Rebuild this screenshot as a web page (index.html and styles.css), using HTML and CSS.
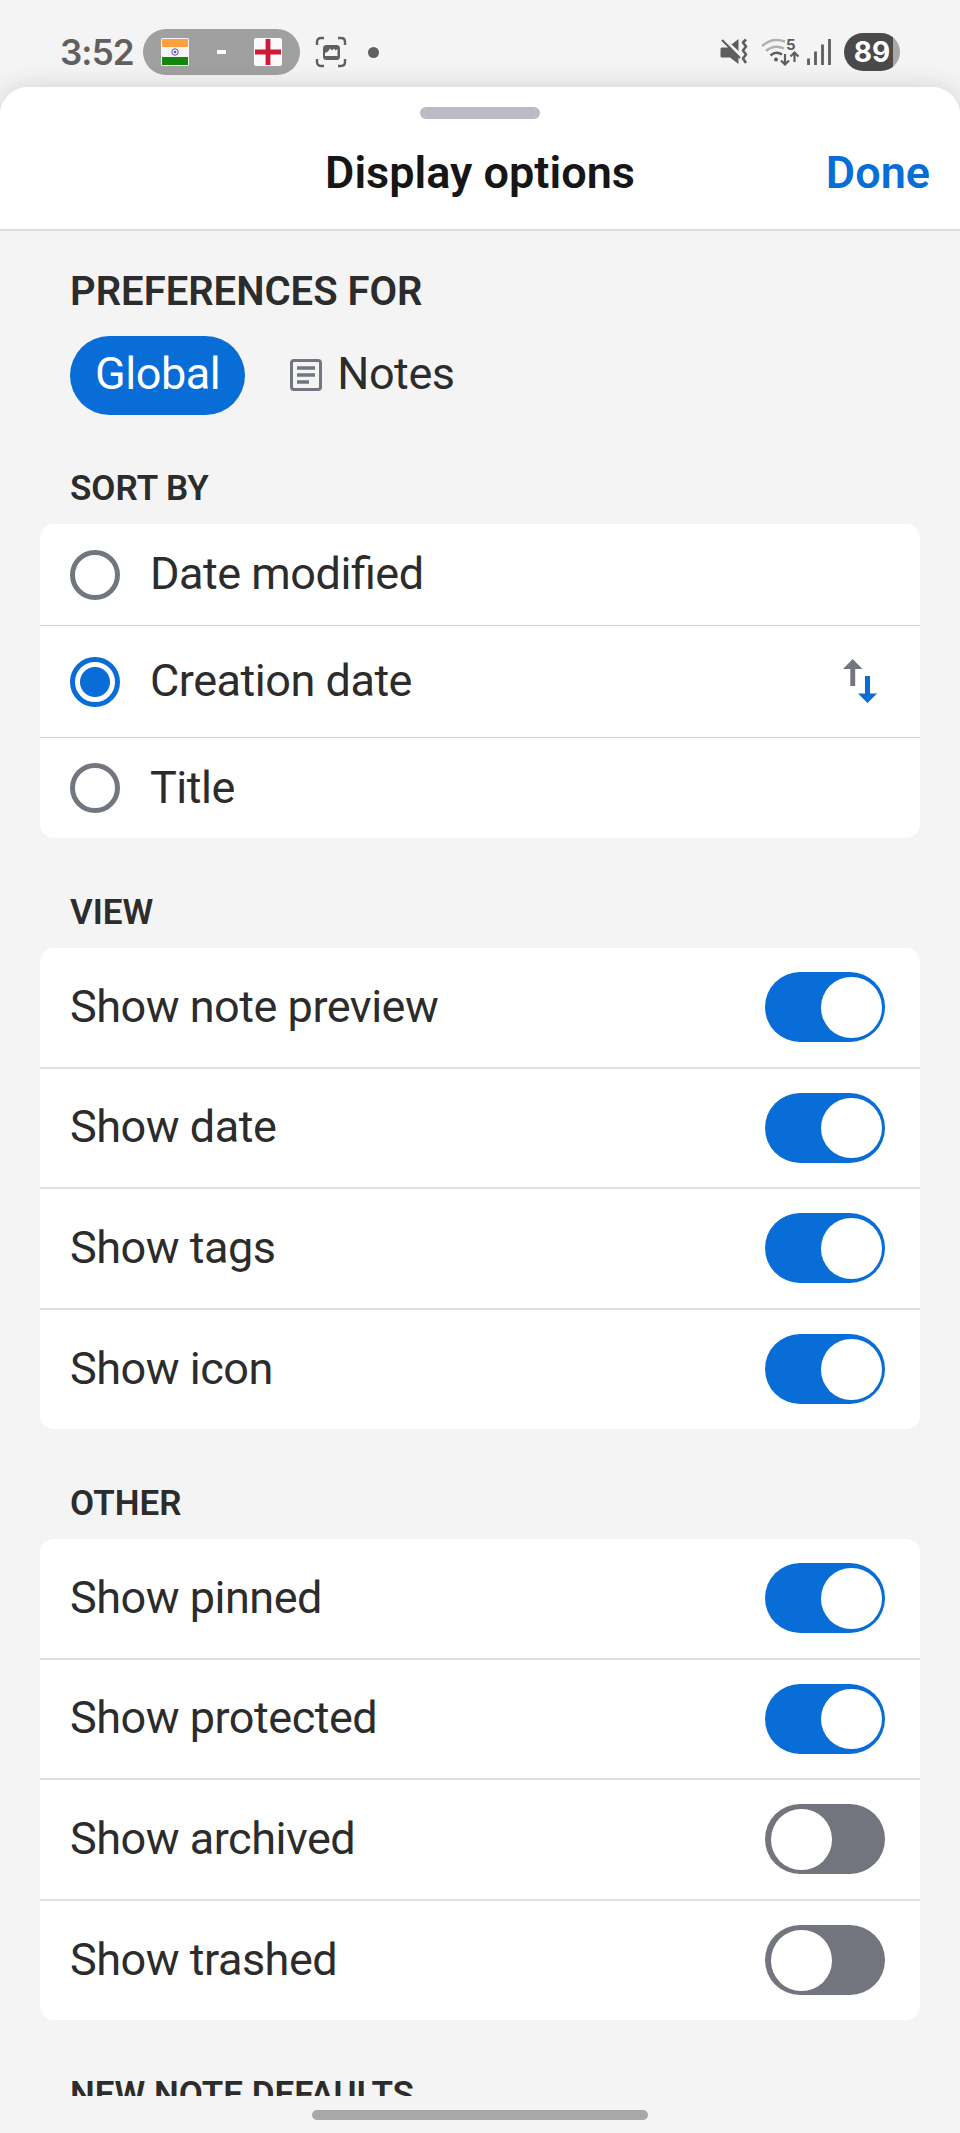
FILE: index.html
```html
<!DOCTYPE html>
<html lang="en">
<head>
    <meta charset="UTF-8">
    <meta name="viewport" content="width=device-width, initial-scale=1.0">
    <title>Display options</title>
    <link rel="stylesheet" href="styles.css">
</head>
<body>
    <div class="status-bar">
        <div class="status-left">
            <span class="clock">3:52</span>
            <div class="score-pill">
                <svg class="flag" viewBox="0 0 28 28"><rect width="28" height="28" rx="2" fill="#f5f5f5"/><rect x="1" y="1" width="26" height="8" fill="#ff9f40"/><rect x="1" y="19" width="26" height="8" fill="#138808"/><circle cx="14" cy="14" r="3.2" fill="none" stroke="#5b57a6" stroke-width="1"/><circle cx="14" cy="14" r="1.3" fill="#5b57a6"/></svg>
                <span class="score-dash"></span>
                <svg class="flag" viewBox="0 0 28 28"><rect width="28" height="28" rx="2" fill="#fafafa"/><path d="M14 1v26M1 14h26" stroke="#cf1738" stroke-width="4.8"/></svg>
            </div>
            <svg class="capture-icon" viewBox="0 0 32 32"><path d="M2 9V6q0-4 4-4h3M23 2h3q4 0 4 4v3M30 23v3q0 4-4 4h-3M9 30H6q-4 0-4-4v-3" fill="none" stroke="#606060" stroke-width="2.4"/><rect x="8" y="9" width="17" height="15" rx="3.5" fill="#606060"/><path d="M10 20v-3l3-1.500 2-3 2 2 2-2 1.500 2 2-1.500V20z" fill="#f4f4f4"/></svg>
            <span class="status-dot"></span>
        </div>
        <div class="status-right">
            <svg class="mute-icon" viewBox="0 0 28 28"><path d="M2 9.500h8L18.500 18v8L10 19.500H2q-1.500 0-1.500-1.500v-7q0-1.500 1.500-1.500zM11.500 6.500l7-5.500v12z" fill="#5e5e5e"/><path d="M2 2l18 18" stroke="#5e5e5e" stroke-width="2.200"/><path d="M26 1.500l-3 3 3 4-3 4 3 4-3 4 3 4.500" fill="none" stroke="#5e5e5e" stroke-width="2.600" stroke-linejoin="round"/></svg>
            <svg class="wifi-icon" viewBox="0 0 38 28"><path d="M1 8q10-9 23-4.500M5 13q8-7 18-2.500" fill="none" stroke="#b0b0b0" stroke-width="2.400"/><path d="M9.500 17.500q5.500-5 11.500-1" fill="none" stroke="#5e5e5e" stroke-width="2.400"/><circle cx="15" cy="21.500" r="2" fill="#5e5e5e"/><path d="M24 16v10M20 22.500l4 4 4-4M33.500 24V14.500M29.500 18.500l4-4 4 4" fill="none" stroke="#5e5e5e" stroke-width="2.200"/><text class="wifi-gen" x="25" y="12">5</text></svg>
            <svg class="signal-icon" viewBox="0 0 24 26"><path d="M1.500 21v4M8.500 14v11M15.500 7v18M22.500 1v24" stroke="#5e5e5e" stroke-width="2.800" stroke-linecap="square"/></svg>
            <span class="battery">89</span>
        </div>
    </div>

    <div class="sheet">
        <div class="sheet-header">
            <div class="handle"></div>
            <div class="title-row">
                <h1>Display options</h1>
                <a class="done-btn" href="#">Done</a>
            </div>
        </div>

        <div class="content">
            <h2 class="pref-heading">PREFERENCES FOR</h2>
            <div class="tabs">
                <button class="tab active">Global</button>
                <button class="tab">
                    <svg class="note-icon" viewBox="0 0 32 32"><rect x="1.500" y="1.500" width="29" height="29" rx="2.500" fill="none" stroke="#72767e" stroke-width="3"/><path d="M7 9h18M7 16h18M7 23h12" stroke="#72767e" stroke-width="3.400"/></svg>
                    Notes
                </button>
            </div>

            <h3 class="section-heading">SORT BY</h3>
            <div class="card sort-card">
                <label class="row"><span class="radio"></span>Date modified</label>
                <label class="row selected"><span class="radio checked"></span>Creation date
                    <svg class="sort-icon" viewBox="0 0 34 44"><path d="M0 10L9.700 0l9.700 10h-7.200v17H7.300V10z" fill="#72767e"/><path d="M15 34.500h7V17h5v17.500h7L24.500 44z" fill="#086dd6"/></svg>
                </label>
                <label class="row"><span class="radio"></span>Title</label>
            </div>

            <h3 class="section-heading">VIEW</h3>
            <div class="card">
                <div class="row">Show note preview <span class="switch on"></span></div>
                <div class="row">Show date <span class="switch on"></span></div>
                <div class="row">Show tags <span class="switch on"></span></div>
                <div class="row">Show icon <span class="switch on"></span></div>
            </div>

            <h3 class="section-heading">OTHER</h3>
            <div class="card">
                <div class="row">Show pinned <span class="switch on"></span></div>
                <div class="row">Show protected <span class="switch on"></span></div>
                <div class="row">Show archived <span class="switch"></span></div>
                <div class="row">Show trashed <span class="switch"></span></div>
            </div>

            <h3 class="section-heading">NEW NOTE DEFAULTS</h3>
        </div>
    </div>

    <div class="nav-bar"><span class="nav-pill"></span></div>
</body>
</html>
```
FILE: styles.css
```css
* {
    box-sizing: border-box;
}

body {
    margin: 0;
    height: 2133px;
    display: flex;
    flex-direction: column;
    overflow: hidden;
    background: #f4f4f4;
    color: #2c2c2c;
    font-family: Roboto, sans-serif;
    font-size: 45px;
}

svg {
    display: block;
    flex: none;
}

/* Status bar */
.status-bar {
    height: 87px;
    flex: none;
    display: flex;
    justify-content: space-between;
    padding: 29px 60px 0;
}

.status-left,
.status-right {
    height: 46px;
    display: flex;
    align-items: center;
}

.clock {
    width: 83px;
    font-family: Inter, sans-serif;
    font-size: 35px;
    font-weight: 600;
    letter-spacing: -0.9px;
    color: #606060;
}

.score-pill {
    width: 157px;
    height: 46px;
    padding: 0 18px;
    display: flex;
    align-items: center;
    justify-content: space-between;
    border-radius: 23px;
    background: #a0a0a0;
}

.flag {
    width: 28px;
    height: 28px;
}

.score-dash {
    width: 9px;
    height: 4px;
    background: #fff;
}

.capture-icon {
    width: 32px;
    height: 32px;
    margin-left: 15px;
}

.status-dot {
    width: 11px;
    height: 11px;
    margin-left: 21px;
    border-radius: 50%;
    background: #606060;
}

.mute-icon {
    width: 28px;
    height: 28px;
    margin-right: 13px;
}

.wifi-icon {
    width: 38px;
    height: 28px;
    margin-right: 8px;
    overflow: visible;
}

.wifi-gen {
    font-family: Inter, sans-serif;
    font-size: 15px;
    font-weight: 700;
    fill: #5e5e5e;
}

.signal-icon {
    width: 24px;
    height: 26px;
    margin-right: 13px;
}

.battery {
    width: 56px;
    height: 38px;
    border-radius: 19px;
    background: linear-gradient(90deg, #4a4a4a 49px, #a8a8a8 49px);
    color: #fff;
    font-family: Inter, sans-serif;
    font-size: 28px;
    font-weight: 700;
    line-height: 38px;
    text-align: center;
}

/* Bottom sheet */
.sheet {
    height: 2009px;
    flex: none;
    overflow: hidden;
    border-radius: 28px 28px 0 0;
    background: #f4f4f5;
    box-shadow: 0 0 24px rgba(0, 0, 0, 0.14);
    clip-path: inset(-40px 0 0 0);
}

.sheet-header {
    height: 144px;
    padding-top: 20px;
    border-bottom: 2px solid #dfdfe0;
    background: #fff;
}

.handle {
    width: 120px;
    height: 12px;
    margin: 0 auto;
    border-radius: 6px;
    background: #bbbbc5;
}

.title-row {
    display: grid;
    grid-template-columns: 1fr auto 1fr;
    align-items: center;
    height: 53px;
    margin-top: 27px;
    padding: 0 30px;
}

h1 {
    grid-column: 2;
    margin: 0;
    font-size: 45px;
    font-weight: 600;
    line-height: 53px;
    color: #161616;
}

.done-btn {
    justify-self: end;
    color: #086dd6;
    font-weight: 600;
    line-height: 53px;
    text-decoration: none;
}

.content {
    padding: 0 40px;
}

.pref-heading {
    margin: 37px 30px 0;
    font-size: 40px;
    font-weight: 600;
    line-height: 47px;
}

.tabs {
    display: flex;
    margin: 21px 30px -1px;
}

.tab {
    display: flex;
    align-items: center;
    height: 79px;
    padding: 0 25px 4px;
    border: none;
    border-radius: 40px;
    background: none;
    color: #2c2c2c;
    font-family: inherit;
    font-size: 45px;
    letter-spacing: -0.45px;
}

.tab + .tab {
    margin-left: 20px;
}

.tab.active {
    background: #086dd6;
    color: #fff;
}

.note-icon {
    width: 32px;
    height: 32px;
    margin: 3px 15px 0 0;
}

.section-heading {
    height: 110px;
    margin: 0 30px;
    padding-top: 54px;
    font-size: 35px;
    font-weight: 600;
    line-height: 41px;
}

/* Option cards */
.card {
    border-radius: 14px;
    overflow: hidden;
    background: #fff;
}

.row {
    display: flex;
    align-items: center;
    height: 120.500px;
    padding: 0 35px 2px 30px;
    border-bottom: 2px solid #e0e0e1;
    letter-spacing: -0.48px;
    font-feature-settings: "liga" 1;
}

.row:last-child {
    height: 119.500px;
    border-bottom: none;
}

.sort-card .row {
    height: 102px;
    padding-right: 43px;
    border-bottom-width: 1px;
    border-color: #d2d2d3;
}

.sort-card .row.selected {
    height: 112px;
}

.sort-card .row:last-child {
    height: 100px;
}

.radio {
    width: 50px;
    height: 50px;
    margin: 2px 30px 0 0;
    border: 5px solid #72767e;
    border-radius: 50%;
}

.radio.checked {
    border-color: #086dd6;
    background: radial-gradient(circle, #086dd6 14.500px, #fff 15.500px);
}

.sort-icon {
    width: 34px;
    height: 44px;
    margin-left: auto;
}

.switch {
    width: 120px;
    height: 70px;
    margin: 2px 0 0 auto;
    padding: 5px 6px;
    border-radius: 35px;
    background: #72757e;
}

.switch::before {
    content: '';
    display: block;
    width: 60.500px;
    height: 60.500px;
    border-radius: 50%;
    background: #fff;
}

.switch.on {
    background: #086dd6;
}

.switch.on::before {
    margin-left: 50px;
}

/* Gesture navigation */
.nav-bar {
    flex: 1;
    display: flex;
    justify-content: center;
    padding-top: 14px;
}

.nav-pill {
    width: 336px;
    height: 10px;
    border-radius: 5px;
    background: #a8a8a8;
}
```
